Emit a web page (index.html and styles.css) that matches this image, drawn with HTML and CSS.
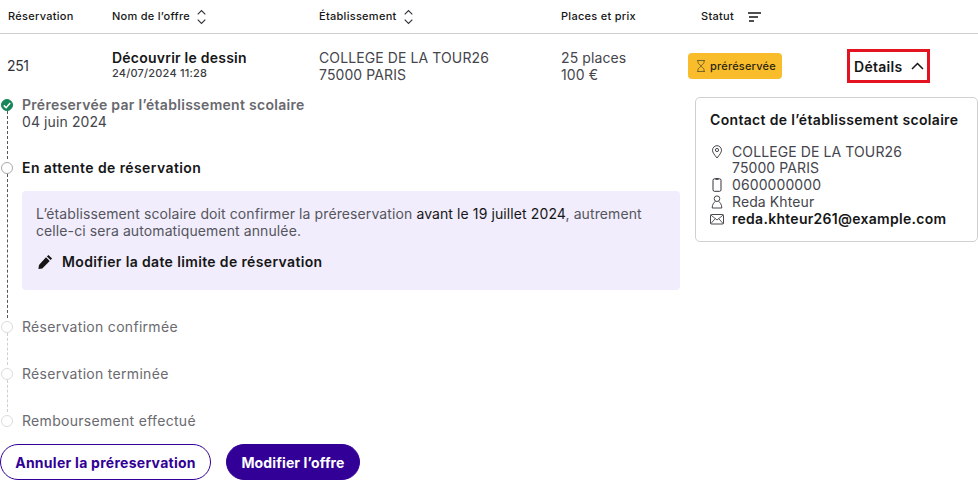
FILE: index.html
```html
<!DOCTYPE html>
<html lang="fr">
<head>
<meta charset="utf-8">
<title>Réservations</title>
<link rel="stylesheet" href="styles.css">
</head>
<body>
<div class="table-head">
  <div class="th">Réservation</div>
  <div class="th">Nom de l’offre
    <svg class="sort" width="9" height="16" viewBox="0 0 9 16"><path d="M.7 5.300 4.500 1.500l3.800 3.800M.7 10.700l3.800 3.800 3.800-3.800" fill="none" stroke="#30303a" stroke-width="1.1"/></svg>
  </div>
  <div class="th">Établissement
    <svg class="sort" width="9" height="16" viewBox="0 0 9 16"><path d="M.7 5.300 4.500 1.500l3.800 3.800M.7 10.700l3.800 3.800 3.800-3.800" fill="none" stroke="#30303a" stroke-width="1.1"/></svg>
  </div>
  <div class="th">Places et prix</div>
  <div class="th th-status">Statut
    <svg class="filter" width="13" height="10" viewBox="0 0 13 10"><path d="M0 1h13M1 5h9M1 9h5" fill="none" stroke="#161617" stroke-width="1.300"/></svg>
  </div>
</div>
<div class="table-row">
  <div class="cell-id">251</div>
  <div class="offer">
    <div class="offer-name">Découvrir le dessin</div>
    <div class="offer-date">24/07/2024 11:28</div>
  </div>
  <div class="lines">COLLEGE DE LA TOUR26<br>75000 PARIS</div>
  <div class="lines">25 places<br>100 €</div>
  <div><span class="badge">
    <svg width="10" height="12" viewBox="0 0 10 12"><path d="M1 .5h8M1 11.500h8M2 .5v2.200c0 1.300 3 2.300 3 3.300s-3 2-3 3.300v2.200M8 .5v2.200c0 1.300-3 2.300-3 3.300s3 2 3 3.300v2.200" fill="none" stroke="#5a5028" stroke-width=".8"/></svg>
    préréservée</span></div>
  <div class="details-cell"><div class="details">Détails
    <svg width="13" height="8" viewBox="0 0 13 8"><path d="M1 7l5.500-5.500L12 7" fill="none" stroke="#161617" stroke-width="1.500"/></svg>
  </div></div>
</div>
<div class="panel">
  <div class="timeline">
    <div class="step step-one">
      <div class="rail"><span class="dot dot-done"><svg width="8" height="7" viewBox="0 0 8 7"><path d="M.8 3.400l2.300 2.300L7.200 1" fill="none" stroke="#fff" stroke-width="1.500"/></svg></span><span class="line"></span></div>
      <div><div class="step-title muted">Préreservée par l’établissement scolaire</div><div class="step-sub">04 juin 2024</div></div>
    </div>
    <div class="step step-two">
      <div class="rail"><span class="dot"></span><span class="line"></span></div>
      <div class="step-main">
        <div class="step-title">En attente de réservation</div>
        <div class="callout">
          <p class="callout-text">L’établissement scolaire doit confirmer la préreservation <span class="dark">avant le 19 juillet 2024</span>, autrement celle-ci sera automatiquement annulée.</p>
          <div class="callout-link">
            <svg width="15" height="15" viewBox="0 0 15 15"><path d="M10.400.9l3.700 3.700-1.500 1.500-3.700-3.700zM8 3.300 11.700 7l-7.400 7.400-3.900.6.6-3.900z" fill="#161617"/></svg>
            Modifier la date limite de réservation</div>
        </div>
      </div>
    </div>
    <div class="step step-next">
      <div class="rail"><span class="dot dot-off"></span><span class="line line-off"></span></div>
      <div class="step-plain">Réservation confirmée</div>
    </div>
    <div class="step step-next">
      <div class="rail"><span class="dot dot-off"></span><span class="line line-off"></span></div>
      <div class="step-plain">Réservation terminée</div>
    </div>
    <div class="step step-last">
      <div class="rail"><span class="dot dot-off"></span></div>
      <div class="step-plain">Remboursement effectué</div>
    </div>
    <div class="actions">
      <button class="btn btn-outline">Annuler la préreservation</button>
      <button class="btn btn-solid">Modifier l’offre</button>
    </div>
  </div>
  <aside class="contact">
    <div class="contact-title">Contact de l’établissement scolaire</div>
    <div class="contact-row"><svg width="12" height="14" viewBox="0 0 12 14"><path d="M6 13C3.500 9.800 1.500 7.600 1.500 5.200a4.500 4.500 0 0 1 9 0C10.500 7.600 8.500 9.800 6 13z" fill="none" stroke="#33333a" stroke-width=".9"/><circle cx="6" cy="5" r="1.600" fill="none" stroke="#33333a" stroke-width=".9"/></svg><span>COLLEGE DE LA TOUR26<br>75000 PARIS</span></div>
    <div class="contact-row"><svg width="12" height="14" viewBox="0 0 12 14"><rect x="2" y=".8" width="8" height="12.500" rx="1.500" fill="none" stroke="#33333a"/><path d="M4.500 1h3" stroke="#33333a" stroke-width="1.500"/></svg><span>0600000000</span></div>
    <div class="contact-row"><svg width="12" height="14" viewBox="0 0 12 14"><circle cx="6" cy="3.700" r="2.800" fill="none" stroke="#33333a" stroke-width=".9"/><path d="M4.500 6.200C2.800 7.500 1.200 9.500 1.200 13h9.600c0-3.500-1.600-5.500-3.300-6.800" fill="none" stroke="#33333a" stroke-width=".9"/></svg><span>Reda Khteur</span></div>
    <div class="contact-row"><svg width="14" height="14" viewBox="0 0 14 14"><rect x=".5" y="2.500" width="13" height="9.500" rx="1" fill="none" stroke="#33333a" stroke-width=".9"/><path d="M.8 3l6.200 5 6.200-5M.8 11.700l4.400-5M13.200 11.700l-4.400-5" fill="none" stroke="#33333a" stroke-width=".8"/></svg><span class="email">reda.khteur261@example.com</span></div>
  </aside>
</div>
</body>
</html>
```
FILE: styles.css
```css
* { box-sizing: border-box; }
html, body { margin: 0; padding: 0; }
body {
  width: 978px;
  height: 491px;
  overflow: hidden;
  background: #fff;
  color: #161617;
  font-family: Inter, "Liberation Sans", sans-serif;
  font-size: 14px;
  letter-spacing: .1px;
  line-height: 17px;
}
.table-head, .table-row {
  display: grid;
  grid-template-columns: 112px 207px 242px 127px 159px 131px;
}
.table-head {
  height: 34px;
  border-bottom: 1px solid #cfcfcf;
  align-items: center;
  font-size: 11px;
  font-weight: 500;
  letter-spacing: .28px;
}
.th { display: flex; align-items: center; gap: 7px; }
.th:first-child { padding-left: 8px; }
.th-status { padding-left: 13px; gap: 14px; }
.table-row { height: 62px; align-items: center; padding-top: 2px; }
.cell-id { padding-left: 7px; color: #30303a; letter-spacing: -.4px; padding-bottom: 2px; }
.offer { padding-bottom: 5px; }
.offer-name { font-weight: 600; line-height: 17px; letter-spacing: .23px; }
.offer-date { font-size: 11px; font-weight: 500; line-height: 12px; margin-top: 1px; color: #3c3c42; letter-spacing: .2px; }
.lines { color: #45454c; line-height: 17px; }
.badge {
  display: inline-flex;
  align-items: center;
  gap: 4px;
  height: 26px;
  padding: 0 6px 0 8px;
  border-radius: 4px;
  background: #f9bd2b;
  font-size: 11px;
  font-weight: 500;
  color: #2a2510;
  letter-spacing: .2px;
}
.details-cell { display: flex; }
.details {
  display: flex;
  align-items: center;
  gap: 9px;
  width: 83px;
  height: 34px;
  padding-left: 4px;
  border: 3px solid #e3131f;
  font-weight: 600;
  letter-spacing: .28px;
  white-space: nowrap;
}
.panel { display: flex; align-items: flex-start; }
.timeline { width: 679px; margin-left: 1px; flex: none; }
.step { display: flex; gap: 9px; }
.step-one { height: 63px; }
.step-two { height: 159px; }
.step-next { height: 47px; }
.step-last { height: 17px; }
.step-main { flex: 1; }
.rail { width: 12px; flex: none; display: flex; flex-direction: column; align-items: center; padding-top: 3px; }
.dot {
  width: 12px;
  height: 12px;
  flex: none;
  display: flex;
  align-items: center;
  justify-content: center;
  border: 1px solid #a8a8ac;
  border-radius: 50%;
  background: #fff;
}
.dot-done { background: #17855a; border-color: #17855a; }
.dot-off { border-color: #dcdcdc; }
.line { flex: 1; width: 0; border-left: 1px dashed #55555c; }
.line-off { border-left-color: #cfcfd2; }
.step-title { font-weight: 600; line-height: 17px; letter-spacing: .29px; }
.step-main > .step-title { letter-spacing: .41px; }
.muted { color: #68686e; }
.step-sub { color: #45454c; }
.callout {
  margin-top: 15px;
  height: 99px;
  padding: 14px 14px 0;
  border-radius: 4px;
  background: #f1edfc;
}
.callout-text { margin: 0; color: #55555c; }
.dark { color: #161617; }
.callout-link {
  display: flex;
  align-items: center;
  gap: 9px;
  margin-top: 14px;
  margin-left: 2px;
  font-weight: 600;
  letter-spacing: .36px;
}
.step-plain { color: #6a6a70; letter-spacing: .3px; }
.actions { display: flex; gap: 15px; margin-top: 15px; margin-left: -1px; }
.btn {
  height: 36px;
  border-radius: 18px;
  font: inherit;
  font-weight: 700;
  letter-spacing: .27px;
  white-space: nowrap;
  padding: 0;
}
.btn-outline { width: 211px; background: #fff; border: 1px solid #320096; color: #320096; }
.btn-solid { width: 134px; background: #320096; border: 1px solid #320096; color: #fff; letter-spacing: .12px; }
.contact {
  width: 283px;
  height: 145px;
  margin-left: 15px;
  margin-top: 1px;
  padding: 13px 14px 0;
  border: 1px solid #d0d0d0;
  border-radius: 5px;
  flex: none;
}
.contact-title { font-weight: 600; margin-bottom: 15.500px; letter-spacing: .33px; }
.contact-row { display: flex; gap: 8px; color: #45454c; line-height: 16.800px; }
.contact-row svg { flex: none; width: 14px; height: 14px; margin-top: 1px; }
.email { font-weight: 600; color: #161617; letter-spacing: .28px; }
```
